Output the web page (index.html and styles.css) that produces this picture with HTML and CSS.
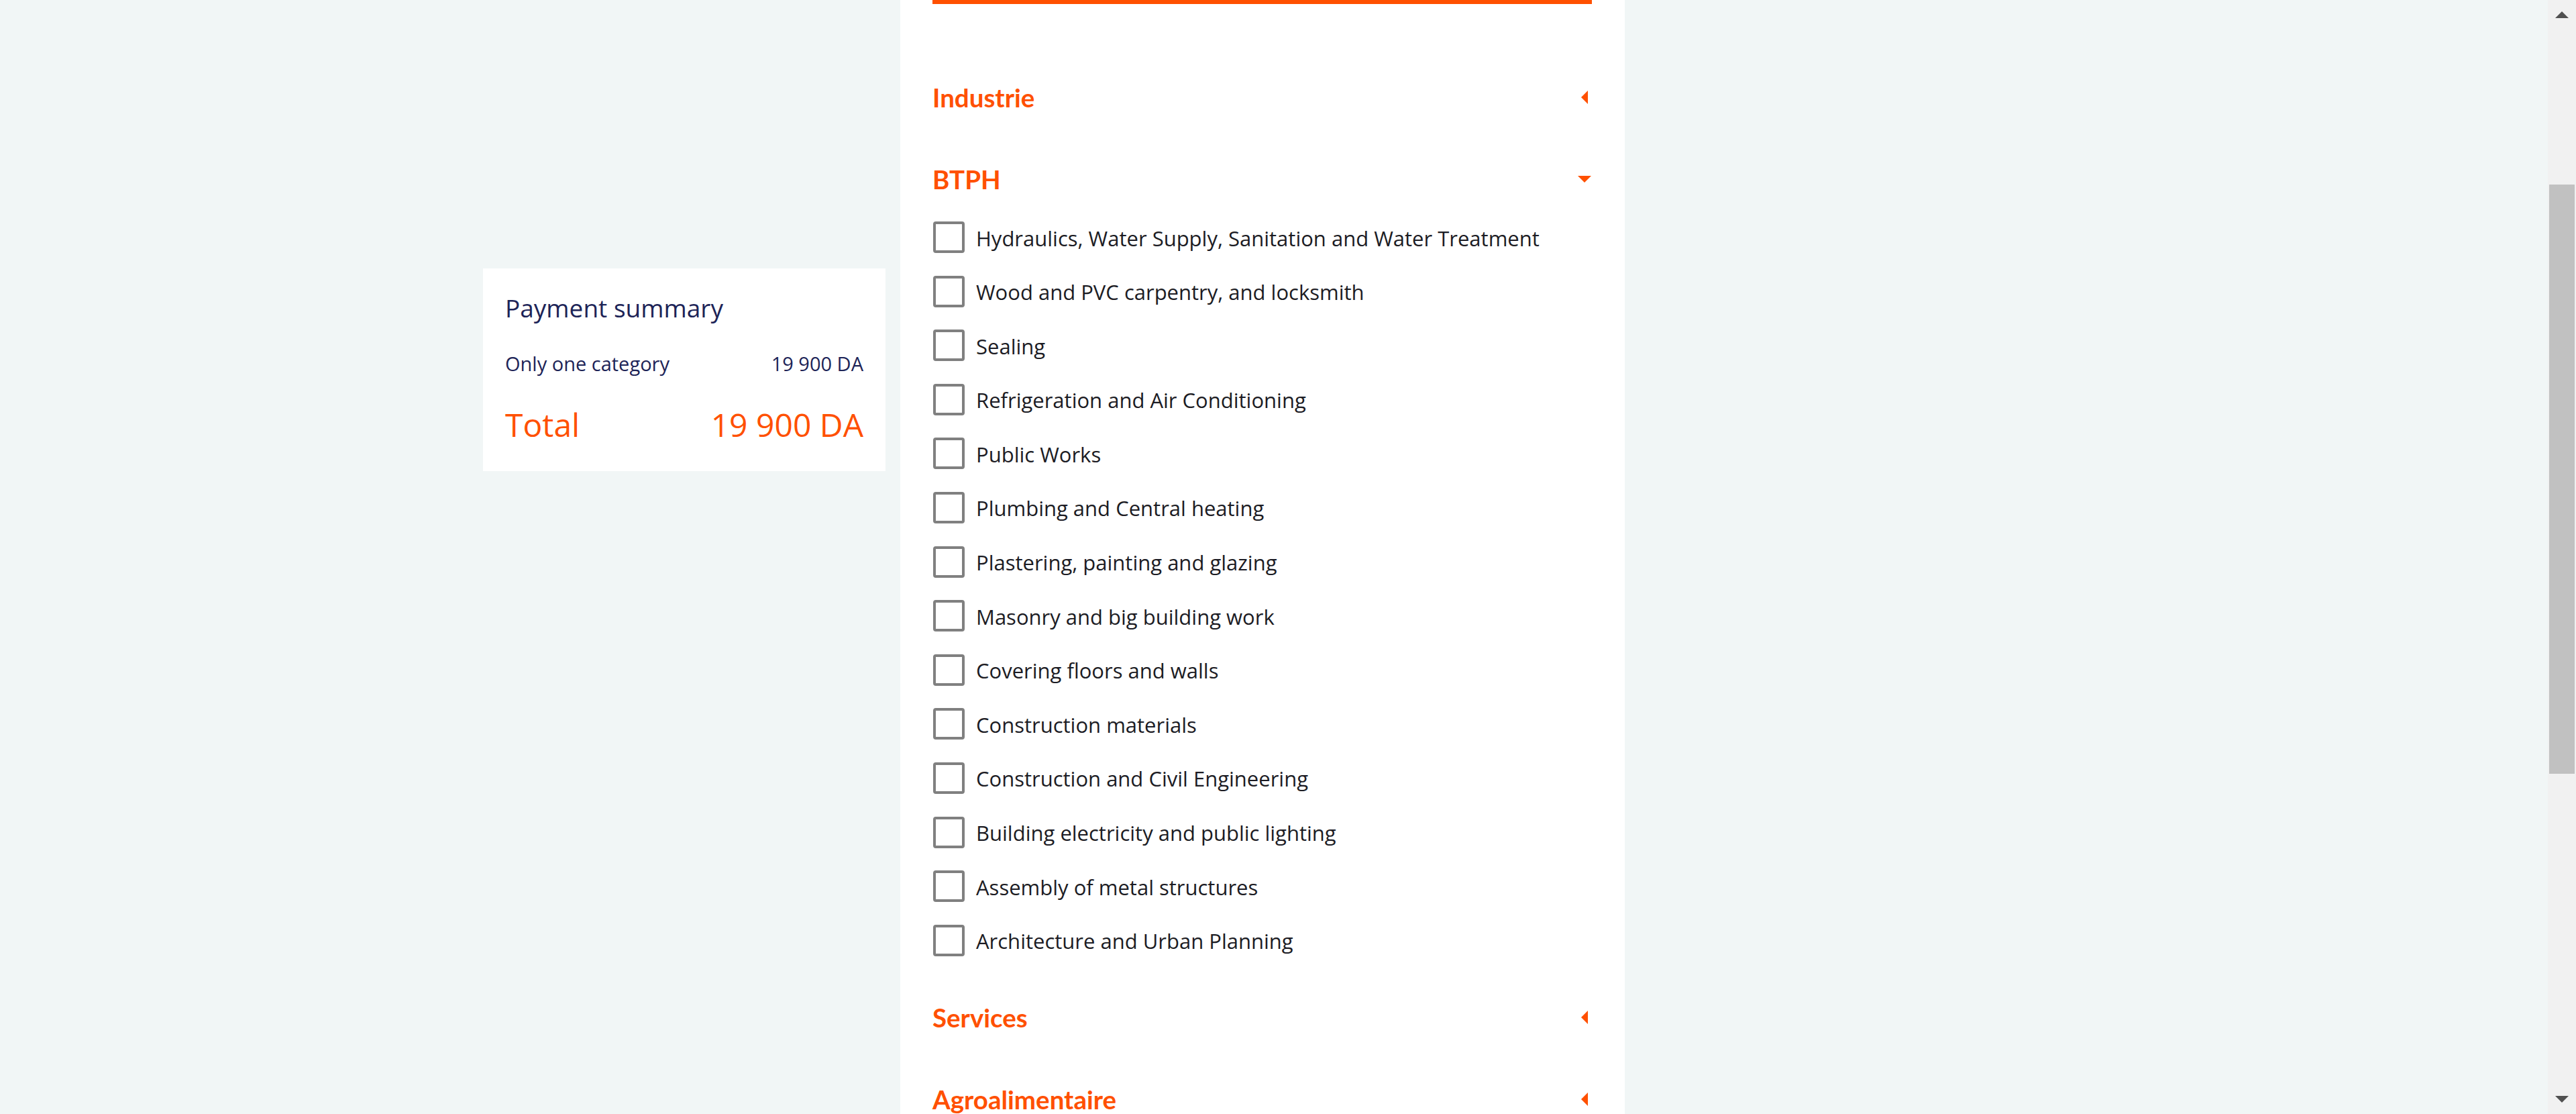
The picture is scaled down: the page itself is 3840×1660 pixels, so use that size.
FILE: index.html
```html
<!DOCTYPE html>
<html lang="en">
<head>
<meta charset="utf-8">
<title>Categories</title>
<link rel="stylesheet" href="styles.css">
</head>
<body>
<div class="app">
  <main class="content">
    <aside class="summary">
      <h2 class="summary-title">Payment summary</h2>
      <div class="summary-row">
        <span>Only one category</span>
        <span>19 900 DA</span>
      </div>
      <div class="summary-total">
        <span>Total</span>
        <span>19 900 DA</span>
      </div>
    </aside>
    <section class="panel">
      <div class="panel-bar"></div>
      <div class="group">
        <div class="group-head"><span>Industrie</span><span class="caret-box"><span class="caret-left"></span></span></div>
      </div>
      <div class="group open">
        <div class="group-head"><span>BTPH</span><span class="caret-box"><span class="caret-down"></span></span></div>
        <ul class="items">
          <li class="item"><span class="box"></span><span>Hydraulics, Water Supply, Sanitation and Water Treatment</span></li>
          <li class="item"><span class="box"></span><span>Wood and PVC carpentry, and locksmith</span></li>
          <li class="item"><span class="box"></span><span>Sealing</span></li>
          <li class="item"><span class="box"></span><span>Refrigeration and Air Conditioning</span></li>
          <li class="item"><span class="box"></span><span>Public Works</span></li>
          <li class="item"><span class="box"></span><span>Plumbing and Central heating</span></li>
          <li class="item"><span class="box"></span><span>Plastering, painting and glazing</span></li>
          <li class="item"><span class="box"></span><span>Masonry and big building work</span></li>
          <li class="item"><span class="box"></span><span>Covering floors and walls</span></li>
          <li class="item"><span class="box"></span><span>Construction materials</span></li>
          <li class="item"><span class="box"></span><span>Construction and Civil Engineering</span></li>
          <li class="item"><span class="box"></span><span>Building electricity and public lighting</span></li>
          <li class="item"><span class="box"></span><span>Assembly of metal structures</span></li>
          <li class="item"><span class="box"></span><span>Architecture and Urban Planning</span></li>
        </ul>
      </div>
      <div class="group">
        <div class="group-head"><span>Services</span><span class="caret-box"><span class="caret-left"></span></span></div>
      </div>
      <div class="group">
        <div class="group-head"><span>Agroalimentaire</span><span class="caret-box"><span class="caret-left"></span></span></div>
      </div>
    </section>
  </main>
  <div class="scrollbar">
    <div class="sb-btn"><span class="sb-up"></span></div>
    <div class="sb-gap"></div>
    <div class="sb-thumb"></div>
    <div class="sb-rest"></div>
    <div class="sb-btn"><span class="sb-down"></span></div>
  </div>
</div>
</body>
</html>
```
FILE: styles.css
```css
html, body {
  margin: 0;
  padding: 0;
  height: 100%;
  overflow: hidden;
}
body {
  background: #f1f6f6;
  font-family: "Open Sans", Lato, sans-serif;
}
.app {
  display: flex;
  height: 1660px;
}
.content {
  flex: 1;
  display: flex;
  align-items: flex-start;
  gap: 22px;
  padding-left: 720px;
  overflow: hidden;
}
.summary {
  width: 600px;
  box-sizing: border-box;
  margin-top: 400px;
  background: #ffffff;
  padding: 37px 33px 40px 33px;
  color: #1d2457;
}
.summary-title {
  margin: 0;
  font-size: 37px;
  font-weight: 400;
  line-height: 44px;
}
.summary-row {
  display: flex;
  justify-content: space-between;
  margin-top: 43px;
  font-size: 29px;
  line-height: 36px;
}
.summary-total {
  display: flex;
  justify-content: space-between;
  margin-top: 44px;
  font-size: 48px;
  line-height: 58px;
  color: #ff5000;
}
.panel {
  width: 1080px;
  box-sizing: border-box;
  height: 1660px;
  background: #ffffff;
  padding: 0 49px 0 48px;
}
.panel-bar {
  height: 6px;
  background: #ff5000;
  margin-bottom: 78px;
}
.group {
  padding: 36px 0;
}
.group.open {
  padding-bottom: 30px;
}
.group-head {
  display: flex;
  justify-content: space-between;
  align-items: center;
  height: 50px;
  font-family: Lato, "Open Sans", sans-serif;
  font-size: 38.5px;
  font-weight: 700;
  color: #ff5000;
  line-height: 50px;
}
.caret-box {
  width: 20px;
  height: 20px;
  margin-right: 1px;
  display: flex;
  align-items: center;
  justify-content: center;
}
.caret-left {
  width: 0;
  height: 0;
  border-top: 10px solid transparent;
  border-bottom: 10px solid transparent;
  border-right: 10px solid #ff5000;
}
.caret-down {
  width: 0;
  height: 0;
  border-left: 10px solid transparent;
  border-right: 10px solid transparent;
  border-top: 10px solid #ff5000;
}
.items {
  list-style: none;
  margin: 38px 0 0 0;
  padding: 0;
  display: flex;
  flex-direction: column;
  gap: 33.6px;
}
.item {
  display: flex;
  align-items: center;
  gap: 17px;
  height: 47px;
  font-size: 31px;
  color: #1c1c24;
  padding-left: 1px;
}
.item span:last-child {
  padding-top: 2px;
}
.box {
  width: 47px;
  height: 47px;
  box-sizing: border-box;
  border: 4px solid #808080;
  border-radius: 4px;
  flex: none;
}
.scrollbar {
  width: 42px;
  flex: none;
  background: #f1f1f1;
  display: flex;
  flex-direction: column;
}
.sb-btn {
  height: 44px;
  display: flex;
  align-items: center;
  justify-content: center;
}
.sb-up {
  width: 0;
  height: 0;
  border-left: 10px solid transparent;
  border-right: 10px solid transparent;
  border-bottom: 10px solid #505050;
}
.sb-down {
  width: 0;
  height: 0;
  border-left: 10px solid transparent;
  border-right: 10px solid transparent;
  border-top: 10px solid #505050;
}
.sb-gap {
  height: 231px;
}
.sb-thumb {
  height: 878px;
  margin: 0 2px;
  background: #c1c1c1;
}
.sb-rest {
  flex: 1;
}
```
